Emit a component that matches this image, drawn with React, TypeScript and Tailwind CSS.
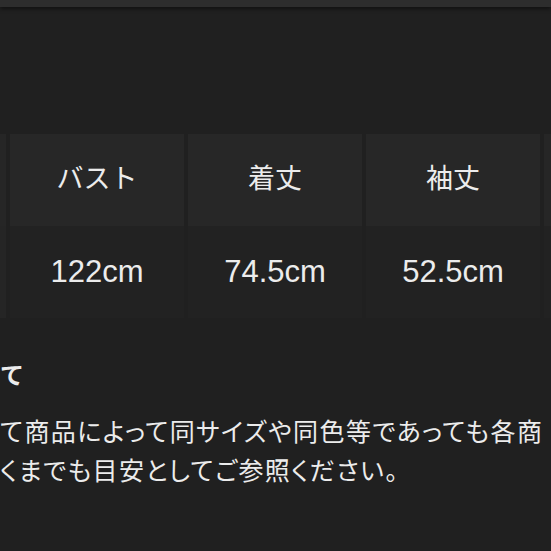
const headers = ['バスト', '着丈', '袖丈'];
const values = ['122cm', '74.5cm', '52.5cm'];

const App = () => {
  return (
    <div className="w-[551px] h-[551px] overflow-hidden bg-[#202020] text-[#ececec] font-['Noto_Sans_CJK_JP','Noto_Sans',sans-serif]">
      {/* top bar */}
      <div className="h-[7px] bg-[#2d2d2d] shadow-[0_2px_4px_rgba(0,0,0,0.5)]" />

      {/* size table */}
      <div className="mt-[127px] grid grid-cols-[6px_174px_174px_174px_1fr] grid-rows-[92px_92px] gap-x-[4px]">
        <div className="bg-[#262626]" />
        {headers.map((h) => (
          <div key={h} className="bg-[#272727] flex items-center justify-center text-[27px] pb-[6px]">
            {h}
          </div>
        ))}
        <div className="bg-[#262626]" />

        <div className="bg-[#252525]" />
        {values.map((v) => (
          <div key={v} className="bg-[#222222] flex items-center justify-center text-[31px] font-['Liberation_Sans',sans-serif]">
            {v}
          </div>
        ))}
        <div className="bg-[#222222]" />
      </div>

      {/* notes */}
      <div className="mt-[41px]">
        <h3 className="text-[24px] font-bold leading-[30px]">て</h3>
        <p className="mt-[22px] text-[25px] leading-[39px] [font-feature-settings:'palt'] tracking-[1.4px] whitespace-nowrap">
          て商品によって同サイズや同色等であっても各商
          <br />
          くまでも目安としてご参照ください。
        </p>
      </div>
    </div>
  );
};

export default App;
